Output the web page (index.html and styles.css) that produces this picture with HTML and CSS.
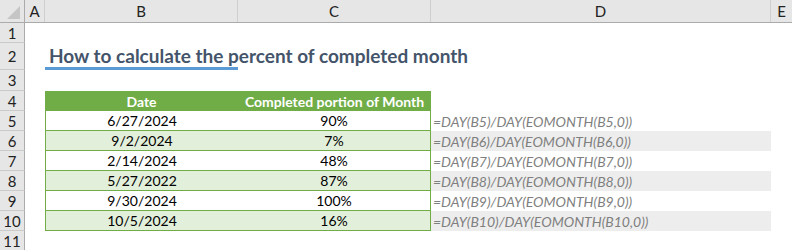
FILE: index.html
```html
<!DOCTYPE html>
<html lang="en">
<head>
    <meta charset="UTF-8">
    <meta name="viewport" content="width=device-width, initial-scale=1.0">
    <title>Percent of completed month</title>
    <link rel="stylesheet" href="styles.css">
</head>
<body>
    <div class="sheet">
        <!-- column letters -->
        <div class="row col-heads">
            <div class="corner"><span class="corner-mark"></span></div>
            <div class="col-head">A</div>
            <div class="col-head">B</div>
            <div class="col-head">C</div>
            <div class="col-head">D</div>
            <div class="col-head">E</div>
        </div>

        <div class="row r1">
            <div class="row-head">1</div>
            <div></div><div></div><div></div><div></div><div></div>
        </div>

        <div class="row r2">
            <div class="row-head">2</div>
            <div></div>
            <div class="title-cell"><h1 class="title">How to calculate the percent of completed month</h1></div>
            <div></div><div></div><div></div>
        </div>

        <div class="row r3">
            <div class="row-head">3</div>
            <div></div><div></div><div></div><div></div><div></div>
        </div>

        <div class="row r4">
            <div class="row-head">4</div>
            <div></div>
            <div class="th th-first">Date</div>
            <div class="th th-last">Completed portion of Month</div>
            <div></div><div></div>
        </div>

        <div id="data-rows"></div>

        <div class="row r11">
            <div class="row-head">11</div>
            <div></div><div></div><div></div><div></div><div></div>
        </div>
    </div>

    <script>
        // Dates with the share of their month already gone
        const rows = [
            { date: "6/27/2024", pct: "90%" },
            { date: "9/2/2024", pct: "7%" },
            { date: "2/14/2024", pct: "48%" },
            { date: "5/27/2022", pct: "87%" },
            { date: "9/30/2024", pct: "100%" },
            { date: "10/5/2024", pct: "16%" }
        ];

        const container = document.getElementById('data-rows');
        rows.forEach((row, i) => {
            const n = i + 5;
            const stripe = i % 2 === 1 ? ' striped' : '';
            const div = document.createElement('div');
            div.className = 'row data' + stripe;
            div.innerHTML = `
                <div class="row-head">${n}</div>
                <div></div>
                <div class="td td-first">${row.date}</div>
                <div class="td td-last">${row.pct}</div>
                <div class="formula">=DAY(B${n})/DAY(EOMONTH(B${n},0))</div>
                <div></div>
            `;
            container.appendChild(div);
        });
    </script>
</body>
</html>
```

FILE: styles.css
```css
:root {
    --green: #70ad47;
    --green-light: #e2efda;
    --head-bg: #e6e6e6;
    --grid-line: #bcbcbc;
    --band: #ededed;
}

* {
    margin: 0;
    padding: 0;
    box-sizing: border-box;
}

body {
    font-family: Lato, "Open Sans", sans-serif;
    font-size: 14px;
    color: #000;
    background: #fff;
}

.sheet {
    width: 792px;
}

.row {
    display: grid;
    grid-template-columns: 25px 20px 193px 193px 340px 21px;
    height: 20px;
}

.row > div {
    display: flex;
    align-items: center;
}

/* header strip with column letters */
.col-heads {
    height: 23px;
    background: var(--head-bg);
    border-bottom: 1px solid #ababab;
}

.col-head {
    justify-content: center;
    border-right: 1px solid #cfcfcf;
    color: #222;
    font-size: 15px;
}

.col-head:last-child {
    border-right: none;
}

.corner {
    position: relative;
    border-right: 1px solid #ababab;
}

.corner-mark {
    position: absolute;
    right: 4px;
    bottom: 3px;
    width: 0;
    height: 0;
    border-left: 13px solid transparent;
    border-bottom: 13px solid #c5c5c5;
}

.row-head {
    justify-content: center;
    background: var(--head-bg);
    border-right: 1px solid #ababab;
    border-bottom: 1px solid #cbcbcb;
    color: #222;
    font-size: 15px;
}

.r1 { height: 20px; }
.r2 { height: 27px; }
.r3 { height: 21px; }

.title-cell {
    border-bottom: 3px solid #5b9bd5;
    overflow: visible;
}

.title {
    font-size: 19px;
    font-weight: bold;
    color: #44546a;
    white-space: nowrap;
    padding-left: 4px;
    margin-top: 1px;
}

/* table header */
.th {
    justify-content: center;
    background: var(--green);
    color: #fff;
    font-weight: bold;
}

/* table body */
.td {
    justify-content: center;
    border-bottom: 1px solid var(--green);
}

.td-first {
    border-left: 1px solid var(--green);
}

.td-last {
    border-right: 1px solid var(--green);
}

.striped .td {
    background: var(--green-light);
}

.formula {
    padding-left: 2px;
    font-style: italic;
    color: #7f7f7f;
    white-space: nowrap;
}

.striped .formula {
    background: var(--band);
}
```
